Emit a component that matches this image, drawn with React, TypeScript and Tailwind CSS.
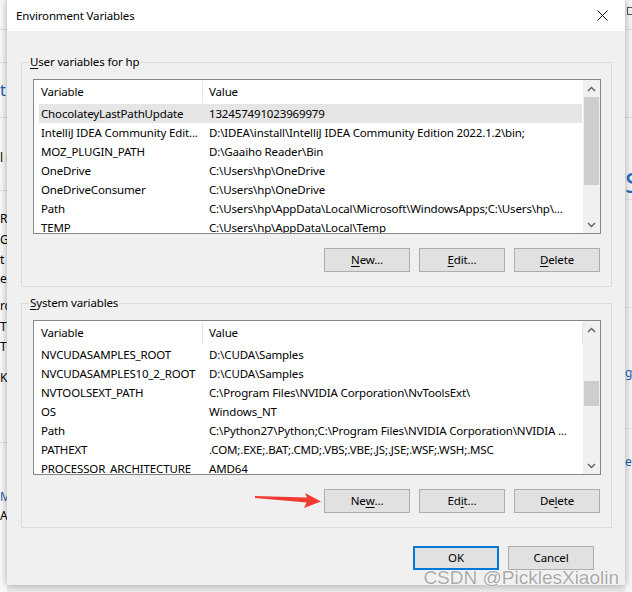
import React from "react";

const userRows: [string, string][] = [
  ["ChocolateyLastPathUpdate", "132457491023969979"],
  ["IntelliJ IDEA Community Edit...", "D:\\IDEA\\install\\IntelliJ IDEA Community Edition 2022.1.2\\bin;"],
  ["MOZ_PLUGIN_PATH", "D:\\Gaaiho Reader\\Bin"],
  ["OneDrive", "C:\\Users\\hp\\OneDrive"],
  ["OneDriveConsumer", "C:\\Users\\hp\\OneDrive"],
  ["Path", "C:\\Users\\hp\\AppData\\Local\\Microsoft\\WindowsApps;C:\\Users\\hp\\..."],
  ["TEMP", "C:\\Users\\hp\\AppData\\Local\\Temp"],
];

const systemRows: [string, string][] = [
  ["NVCUDASAMPLES_ROOT", "D:\\CUDA\\Samples"],
  ["NVCUDASAMPLES10_2_ROOT", "D:\\CUDA\\Samples"],
  ["NVTOOLSEXT_PATH", "C:\\Program Files\\NVIDIA Corporation\\NvToolsExt\\"],
  ["OS", "Windows_NT"],
  ["Path", "C:\\Python27\\Python;C:\\Program Files\\NVIDIA Corporation\\NVIDIA ..."],
  ["PATHEXT", ".COM;.EXE;.BAT;.CMD;.VBS;.VBE;.JS;.JSE;.WSF;.WSH;.MSC"],
  ["PROCESSOR_ARCHITECTURE", "AMD64"],
];

function Chevron({ up }: { up?: boolean }) {
  return (
    <svg width="9" height="6" viewBox="0 0 9 6">
      <path
        d={up ? "M1 5 L4.5 1.5 L8 5" : "M1 1 L4.5 4.5 L8 1"}
        fill="none"
        stroke="#606060"
        strokeWidth="1.4"
      />
    </svg>
  );
}

function Key({ children }: { children: React.ReactNode }) {
  return <span className="underline underline-offset-2 decoration-1">{children}</span>;
}

function Btn({ children, focused }: { children: React.ReactNode; focused?: boolean }) {
  return (
    <div
      className={
        "w-[86px] h-[24px] flex items-center justify-center bg-[#e1e1e1] text-black " +
        (focused ? "border-2 border-[#0078d7]" : "border border-[#adadad]")
      }
    >
      {children}
    </div>
  );
}

function VarList({
  rows,
  selected,
  thumbTop,
  thumbHeight,
  endDivider,
}: {
  rows: [string, string][];
  selected?: number;
  thumbTop: number;
  thumbHeight: number;
  endDivider?: boolean;
}) {
  return (
    <div className="ml-[11px] w-[568px] h-[155px] border border-[#828790] bg-white flex overflow-hidden">
      <div className="flex-1 flex flex-col overflow-hidden">
        <div className="h-[24px] shrink-0 flex">
          <div className="w-[169px] pl-[7px] flex items-center border-r border-[#e5e5e5] my-[1px]">Variable</div>
          <div className={"flex-1 pl-[6px] flex items-center my-[1px] " + (endDivider ? "border-r border-[#e5e5e5]" : "")}>
            Value
          </div>
        </div>
        {rows.map(([name, value], i) => (
          <div
            key={name + i}
            className={
              "h-[19px] shrink-0 ml-[5px] mr-[1px] flex items-center whitespace-nowrap " +
              (selected === i ? "bg-[#e5e5e5]" : "")
            }
          >
            <div className="w-[164px] shrink-0 pl-[2px] overflow-hidden">{name}</div>
            <div className="pl-[6px] overflow-hidden">{value}</div>
          </div>
        ))}
      </div>
      <div className="w-[17px] shrink-0 bg-[#f0f0f0] flex flex-col">
        <div className="h-[17px] shrink-0 flex items-center justify-center">
          <Chevron up />
        </div>
        <div className="flex-1 flex flex-col">
          <div style={{ height: thumbTop }} />
          <div className="bg-[#cdcdcd] mx-[1px]" style={{ height: thumbHeight }} />
        </div>
        <div className="h-[17px] shrink-0 flex items-center justify-center">
          <Chevron />
        </div>
      </div>
    </div>
  );
}

function Group({
  legend,
  children,
  buttons,
  className,
}: {
  legend: React.ReactNode;
  children: React.ReactNode;
  buttons: React.ReactNode;
  className?: string;
}) {
  return (
    <div className={"relative ml-[14px] w-[591px] border border-[#dcdcdc] pt-[16px] pb-[14px] " + (className ?? "")}>
      <div className="absolute left-[7px] -top-[9px] px-[1px] bg-[#f0f0f0] leading-[16px]">{legend}</div>
      {children}
      <div className="mt-[14px] flex justify-end gap-[9px] pr-[11px]">{buttons}</div>
    </div>
  );
}

function LeftStrip() {
  return (
    <div className="w-[7px] h-[592px] shrink-0 bg-[#fafafa] overflow-hidden flex flex-col text-[12px] leading-[19px] text-black">
      <div className="h-[30px] shrink-0 border-b border-[#e3e3e3]" />
      <div className="h-[33px] shrink-0 border-b border-[#e3e3e3]" />
      <div className="h-[55px] shrink-0 border-b border-[#e3e3e3] flex items-center text-[16px] text-[#1a5fb4]">t</div>
      <div className="h-[73px] shrink-0 border-b border-[#e3e3e3] pt-[30px] whitespace-nowrap">l r</div>
      <div className="h-[252px] shrink-0 border-b border-[#e3e3e3] pt-[18px] flex flex-col">
        <div className="h-[21px]">R</div>
        <div className="h-[20px]">G</div>
        <div className="h-[19px]">t</div>
        <div className="h-[27px]">e</div>
        <div className="h-[21px]">rc</div>
        <div className="h-[20px]">T</div>
        <div className="h-[31px]">T</div>
        <div className="h-[20px]">K</div>
      </div>
      <div className="h-[70px] shrink-0 flex flex-col pt-[44px]">
        <div className="h-[28px] text-[#1a5fb4]">Mi</div>
        <div>A</div>
      </div>
    </div>
  );
}

function RightStrip() {
  return (
    <div className="w-[7px] h-[592px] shrink-0 bg-[#f7f7f7] overflow-hidden flex flex-col text-[12px]">
      <div className="h-[30px] shrink-0 border-b border-[#e3e3e3] pl-[2px] pt-[7px]">
        <div className="w-[8px] h-[8px] border border-[#555]" />
      </div>
      <div className="h-[88px] shrink-0 border-b border-[#e3e3e3]" />
      <div className="h-[82px] shrink-0 border-b border-[#e3e3e3] pt-[50px] text-[28px] leading-[28px] text-[#1a6fc4]">S</div>
      <div className="h-[108px] shrink-0 border-b border-[#e3e3e3]" />
      <div className="h-[121px] shrink-0 border-b border-[#e3e3e3] pt-[56px] text-[#1a5fb4] whitespace-nowrap">ge</div>
      <div className="h-[60px] shrink-0 pt-[24px] text-[#1a5fb4] whitespace-nowrap">er</div>
    </div>
  );
}

export default function App() {
  return (
    <div className="relative w-[632px] h-[592px] overflow-hidden flex items-start bg-[#ececec] font-['Segoe_UI','Noto_Sans',sans-serif] text-[11.5px] tracking-[-0.15px] text-black">
      <LeftStrip />
      <div className="w-[618px] h-[585px] shrink-0 bg-[#f0f0f0] flex flex-col shadow-[0_0_8px_rgba(0,0,0,0.35)] z-10">
        <div className="h-[31px] shrink-0 bg-white flex items-center">
          <div className="flex-1 pl-[9px]">Environment Variables</div>
          <div className="w-[46px] h-full flex items-center justify-center">
            <svg width="11" height="11" viewBox="0 0 11 11">
              <path d="M0.5 0.5 L10.5 10.5 M10.5 0.5 L0.5 10.5" stroke="#111" strokeWidth="1" />
            </svg>
          </div>
        </div>

        <Group
          className="mt-[31px]"
          legend={
            <>
              <Key>U</Key>ser variables for hp
            </>
          }
          buttons={
            <>
              <Btn>
                <Key>N</Key>ew...
              </Btn>
              <Btn>
                <Key>E</Key>dit...
              </Btn>
              <Btn>
                <Key>D</Key>elete
              </Btn>
            </>
          }
        >
          <VarList rows={userRows} selected={0} thumbTop={0} thumbHeight={88} />
        </Group>

        <Group
          className="mt-[16px]"
          legend={
            <>
              <Key>S</Key>ystem variables
            </>
          }
          buttons={
            <>
              <Btn>
                Ne<Key>w</Key>...
              </Btn>
              <Btn>
                Ed<Key>i</Key>t...
              </Btn>
              <Btn>
                De<Key>l</Key>ete
              </Btn>
            </>
          }
        >
          <VarList rows={systemRows} thumbTop={43} thumbHeight={25} endDivider />
        </Group>

        <div className="mt-[18px] flex justify-end gap-[9px] pr-[31px]">
          <Btn focused>OK</Btn>
          <Btn>Cancel</Btn>
        </div>
      </div>
      <RightStrip />

      <svg className="absolute left-[254px] top-[492px] z-20" width="70" height="18" viewBox="254 492 70 18">
        <polygon points="255,496 307,497.5 305,493 321,501.5 304,508 306.5,502.5 255,498" fill="#f23b30" />
      </svg>

      <div className="absolute right-[13px] bottom-[4px] z-20 font-['Liberation_Sans',sans-serif] text-[19px] leading-[20px] tracking-normal text-[rgba(110,110,110,0.6)] [text-shadow:0_0_2px_#fff,0_0_1px_#fff]">
        CSDN @PicklesXiaolin
      </div>
    </div>
  );
}
